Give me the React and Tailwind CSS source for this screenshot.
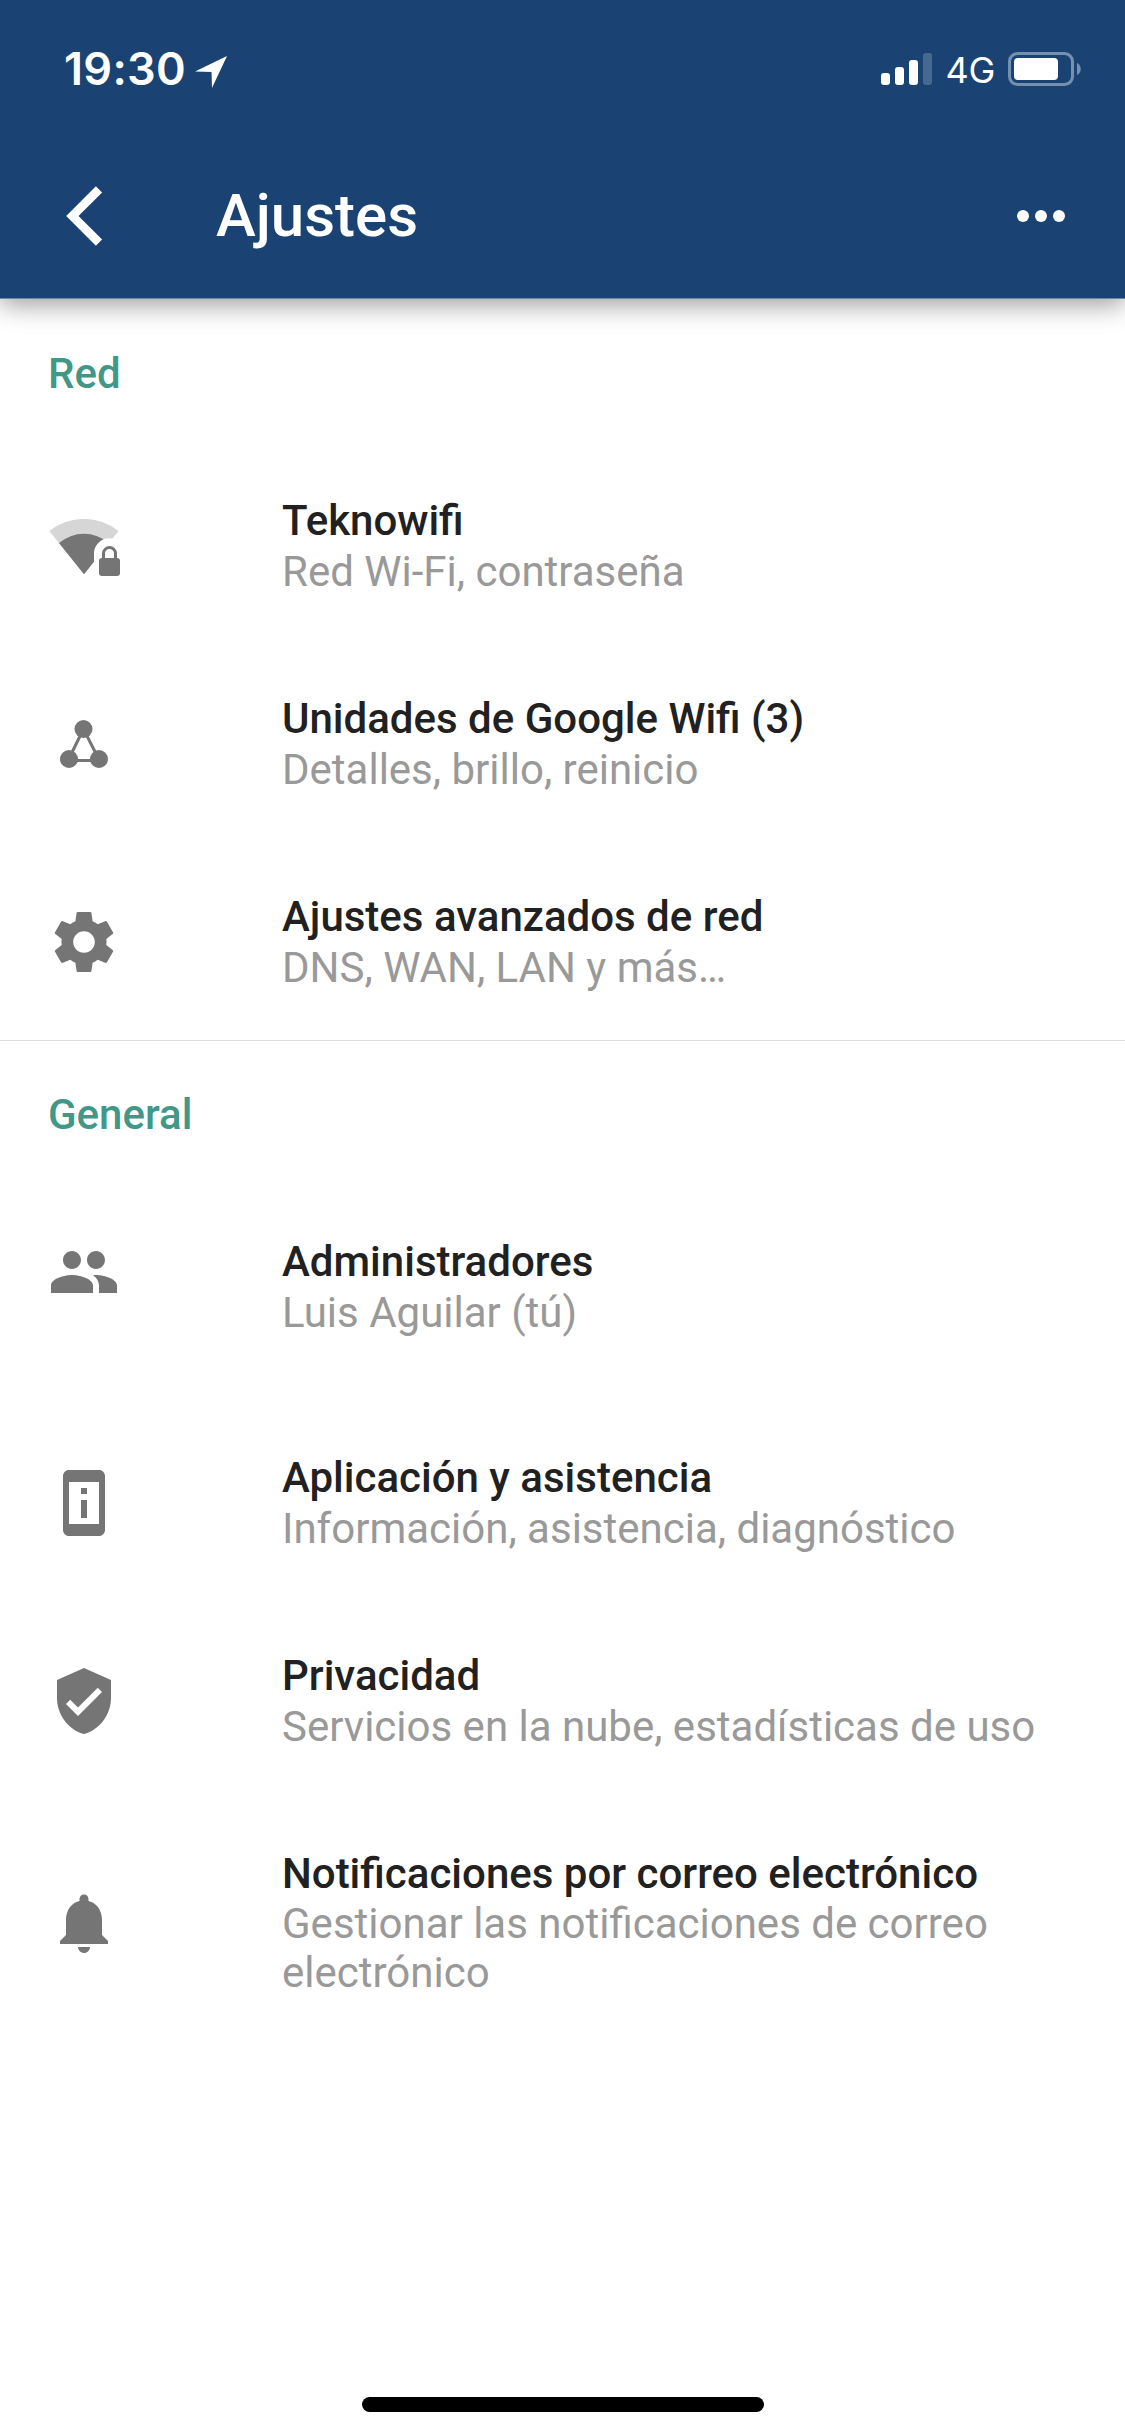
import { MdPeople, MdPermDeviceInformation, MdVerifiedUser, MdNotifications } from "react-icons/md";

const WifiLockIcon = ({ className }) => (
  <svg className={className} width="76" height="60" viewBox="0 0 76 60" fill="currentColor">
    <path d="M.3 12A55.600 55.600 0 0 1 69.500 12L35 55.200Z" fill="#d6d6d6" />
    <path d="M10 24A38.400 38.400 0 0 1 59.900 24L35 55.200Z" />
    <path d="M45 60V34.600a15.300 15.300 0 0 1 30.600 0V60Z" fill="#fff" />
    <rect x="50" y="39" width="21" height="18" rx="3" />
    <path d="M54.500 40V34.500a6 6 0 0 1 12 0V40" fill="none" stroke="currentColor" strokeWidth="3" />
  </svg>
);

const MeshIcon = ({ className }) => (
  <svg className={className} width="48" height="48" viewBox="0 0 48 48" fill="currentColor">
    <path d="M23.500 9L8 40.500H39.500Z" fill="none" stroke="currentColor" strokeWidth="3" />
    <circle cx="23.500" cy="9" r="9" />
    <circle cx="9" cy="39" r="9" />
    <circle cx="39" cy="39" r="9" />
  </svg>
);

const GearIcon = ({ className }) => (
  <svg className={className} viewBox="0 0 24 24" fill="currentColor">
    <path d="M19.43 12.98c.04-.32.07-.64.07-.98s-.03-.66-.07-.98l2.11-1.65c.19-.15.24-.42.12-.64l-2-3.46c-.12-.22-.39-.3-.61-.22l-2.49 1c-.52-.4-1.08-.73-1.690-.98l-.38-2.650C14.460 2.180 14.250 2 14 2h-4c-.25 0-.46.18-.49.42l-.38 2.650c-.61.25-1.170.59-1.690.98l-2.490-1c-.23-.09-.49 0-.61.22l-2 3.460c-.13.22-.07.49.12.64l2.110 1.650c-.04.32-.07.65-.07.98s.03.66.07.98l-2.110 1.650c-.19.15-.24.42-.12.64l2 3.460c.12.22.39.3.61.22l2.490-1c.52.4 1.080.73 1.690.98l.38 2.650c.03.24.24.42.49.42h4c.25 0 .46-.18.49-.42l.38-2.650c.61-.25 1.170-.59 1.690-.98l2.490 1c.23.09.49 0 .61-.22l2-3.460c.12-.22.07-.49-.12-.64l-2.110-1.650zM12 15.600c-1.990 0-3.600-1.610-3.600-3.600s1.610-3.600 3.600-3.600 3.600 1.610 3.600 3.600-1.610 3.600-3.600 3.600z" />
  </svg>
);

const sections = [
  {
    name: "Red",
    padding: "pt-[49px]",
    items: [
      { title: "Teknowifi", detail: "Red Wi-Fi, contraseña", icon: WifiLockIcon, iconClass: "ml-[49px] mt-6", height: "h-[198px]" },
      { title: "Unidades de Google Wifi (3)", detail: "Detalles, brillo, reinicio", icon: MeshIcon, iconClass: "ml-[60px] mt-[27px]", height: "h-[198px]" },
      { title: "Ajustes avanzados de red", detail: "DNS, WAN, LAN y más…", icon: GearIcon, iconClass: "ml-12 mt-[15px] size-[72px]", height: "h-[149px]" },
    ],
  },
  {
    name: "General",
    padding: "pt-12",
    items: [
      { title: "Administradores", detail: "Luis Aguilar (tú)", icon: MdPeople, iconClass: "ml-12 size-[72px]", height: "h-[216px]" },
      { title: "Aplicación y asistencia", detail: "Información, asistencia, diagnóstico", icon: MdPermDeviceInformation, iconClass: "ml-12 mt-[15px] size-[72px]", height: "h-[198px]" },
      { title: "Privacidad", detail: "Servicios en la nube, estadísticas de uso", icon: MdVerifiedUser, iconClass: "ml-12 mt-[15px] size-[72px]", height: "h-[198px]" },
      { title: "Notificaciones por correo electrónico", detail: "Gestionar las notificaciones de correo electrónico", icon: MdNotifications, iconClass: "ml-12 mt-[39px] size-[72px]", height: "h-[198px]", multiline: true },
    ],
  },
];

const StatusBar = () => (
  <div className="flex h-[132px] items-start justify-between pl-[64px] pr-[44px] pt-[52px] font-[Inter]">
    <div className="flex items-start">
      <span className="-mt-[6px] text-[45px] leading-[45px] font-semibold tracking-[0.3px]">19:30</span>
      <svg className="ml-[9px] mt-1" width="32" height="32" viewBox="0 0 32 32" fill="#fff">
        <path d="M32 0L17 32L16.500 16L0 15.500Z" />
      </svg>
    </div>
    <div className="flex items-start">
      <div className="mt-px flex h-8 items-end gap-[5px]">
        <div className="h-3 w-[9px] rounded-[3px] bg-white" />
        <div className="h-[18px] w-[9px] rounded-[3px] bg-white" />
        <div className="h-[25px] w-[9px] rounded-[3px] bg-white" />
        <div className="h-8 w-[9px] rounded-[3px] bg-white/20" />
      </div>
      <span className="ml-[13px] text-[36px] leading-[36px] tracking-[-0.3px]">4G</span>
      <svg className="ml-[13px]" width="73" height="34" viewBox="0 0 73 34">
        <rect x="1.500" y="1.500" width="63" height="31" rx="8" fill="none" stroke="#7690b0" strokeWidth="3" />
        <rect x="6" y="6" width="44" height="22" rx="4" fill="#fff" />
        <path d="M69 11c5 2 5 10 0 12z" fill="#7690b0" />
      </svg>
    </div>
  </div>
);

const Header = () => (
  <header className="relative z-10 h-[299px] border-b border-[#6d88a5] bg-[#1a4373] text-white shadow-[0_6px_24px_rgba(0,0,0,0.38)]">
    <StatusBar />
    <div className="flex h-[168px] items-center">
      <svg className="ml-[66px]" width="38" height="60" viewBox="0 0 38 60">
        <path d="M33 3.300L6.400 30L33 56.700" fill="none" stroke="#fff" strokeWidth="8.800" />
      </svg>
      <h1 className="ml-[112px] text-[60px] leading-[70px] font-medium">Ajustes</h1>
      <div className="ml-auto mr-[60px] flex gap-[6px]">
        <span className="size-3 rounded-full bg-white" />
        <span className="size-3 rounded-full bg-white" />
        <span className="size-3 rounded-full bg-white" />
      </div>
    </div>
  </header>
);

const SettingsRow = ({ item }) => (
  <div className={`flex items-start ${item.height}`}>
    <div className="w-[282px] shrink-0 text-[#757575]">
      <item.icon className={item.iconClass} />
    </div>
    <div className="w-[760px] text-[42px]">
      <div className="leading-[51px] font-medium text-[#212121]">{item.title}</div>
      <div className={`text-[#999999] ${item.multiline ? "leading-[49px]" : "leading-[51px]"}`}>{item.detail}</div>
    </div>
  </div>
);

export default function App() {
  return (
    <div className="flex h-[2436px] w-[1125px] flex-col overflow-hidden bg-white font-[Roboto]">
      <Header />
      <main className="flex-1">
        {sections.map((section) => (
          <section key={section.name} className={`border-b border-[#dedede] last:border-b-0 ${section.padding}`}>
            <h2 className="mb-[96px] ml-12 text-[42px] leading-[51px] font-medium text-[#419788]">{section.name}</h2>
            {section.items.map((item) => (
              <SettingsRow key={item.title} item={item} />
            ))}
          </section>
        ))}
      </main>
      {/* Home indicator */}
      <div className="mx-auto mb-6 h-[15px] w-[402px] rounded-full bg-black" />
    </div>
  );
}
